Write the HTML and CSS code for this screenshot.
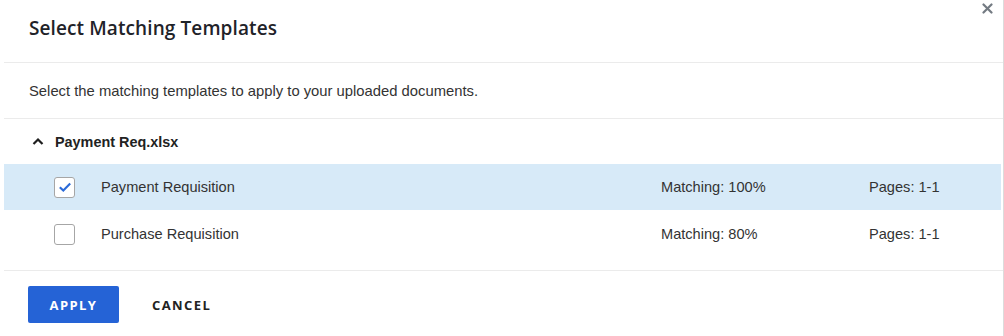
FILE: index.html
```html
<!DOCTYPE html>
<html>
<head>
<meta charset="utf-8">
<link rel="stylesheet" href="styles.css">
</head>
<body>
<div class="dialog">
  <header class="dlg-header">
    <h1 class="dlg-title">Select Matching Templates</h1>
    <button class="close" aria-label="Close">
      <svg width="11" height="11" viewBox="0 0 11 11"><path d="M1.5 1.5 L9.5 9.5 M9.5 1.5 L1.5 9.5" stroke="#737a82" stroke-width="2.2" stroke-linecap="round"/></svg>
    </button>
  </header>
  <div class="desc">Select the matching templates to apply to your uploaded documents.</div>
  <section class="group">
    <div class="group-head">
      <svg class="chev" width="12" height="9" viewBox="0 0 12 9"><path d="M1.5 7 L6 2.5 L10.5 7" fill="none" stroke="#1e1e1e" stroke-width="2.2"/></svg>
      <span>Payment Req.xlsx</span>
    </div>
    <div class="row selected">
      <span class="cb checked"><svg width="14" height="12" viewBox="0 0 14 12"><path d="M1.8 6.2 L5.3 9.6 L12.2 2.4" fill="none" stroke="#2a6ad8" stroke-width="2.1"/></svg></span>
      <span class="name">Payment Requisition</span>
      <span class="match">Matching: 100%</span>
      <span class="pages">Pages: 1-1</span>
    </div>
    <div class="row second">
      <span class="cb"></span>
      <span class="name">Purchase Requisition</span>
      <span class="match">Matching: 80%</span>
      <span class="pages">Pages: 1-1</span>
    </div>
  </section>
  <footer class="dlg-footer">
    <button class="btn primary">APPLY</button>
    <button class="btn link">CANCEL</button>
  </footer>
</div>
</body>
</html>
```
FILE: styles.css
```css
* { box-sizing: border-box; }
html, body { margin: 0; padding: 0; background: #fff; }
body { font-family: "Liberation Sans", Arial, sans-serif; color: #333; }
.dialog {
  margin-left: 4px;
  width: 1000px;
  height: 336px;
  border-right: 1px solid #dcdcdc;
  position: relative;
}
.dlg-header {
  height: 63px;
  border-bottom: 1px solid #ebebeb;
  display: flex;
  align-items: center;
  padding-left: 25px;
}
.dlg-title {
  margin: 0;
  margin-top: -7px;
  font-family: "Open Sans", sans-serif;
  font-weight: 600;
  font-size: 19px;
  color: #1f2329;
  letter-spacing: 0.1px;
}
.close {
  position: absolute;
  right: 9px;
  top: 1px;
  border: 0;
  background: none;
  padding: 0;
  width: 14px;
  height: 14px;
  display: flex;
  align-items: center;
  justify-content: center;
}
.desc {
  height: 56px;
  border-bottom: 1px solid #ebebeb;
  display: flex;
  align-items: center;
  padding-left: 25px;
  font-size: 14.8px;
  color: #333;
}
.group {
  border-bottom: 1px solid #ebebeb;
  padding-bottom: 13px;
}
.group-head {
  height: 45px;
  display: flex;
  align-items: center;
  padding-left: 28px;
  font-weight: bold;
  font-size: 14.4px;
  color: #222;
}
.chev { margin-right: 11px; }
.row {
  height: 46px;
  display: flex;
  align-items: center;
  font-size: 14.6px;
  color: #333;
  margin-right: 2px;
}
.row.second { height: 47px; padding-top: 1px; }
.row.selected { background: #d7eaf8; }
.cb {
  width: 21px;
  height: 21px;
  margin-left: 50px;
  border: 1px solid #a6a6a6;
  border-radius: 3px;
  background: #fff;
  display: flex;
  align-items: center;
  justify-content: center;
}
.name { margin-left: 26px; width: 560px; }
.match { width: 208px; }
.dlg-footer {
  display: flex;
  align-items: center;
  padding-left: 24px;
  padding-top: 15px;
  gap: 33px;
}
.btn {
  font-family: "Open Sans", sans-serif;
  font-weight: 700;
  font-size: 13px;
  letter-spacing: 1.4px;
  border: 0;
  height: 37px;
  padding: 0;
}
.btn.primary {
  background: #2563d6;
  color: #fff;
  width: 91px;
  border-radius: 2px;
}
.btn.link {
  background: none;
  color: #222;
}
```
